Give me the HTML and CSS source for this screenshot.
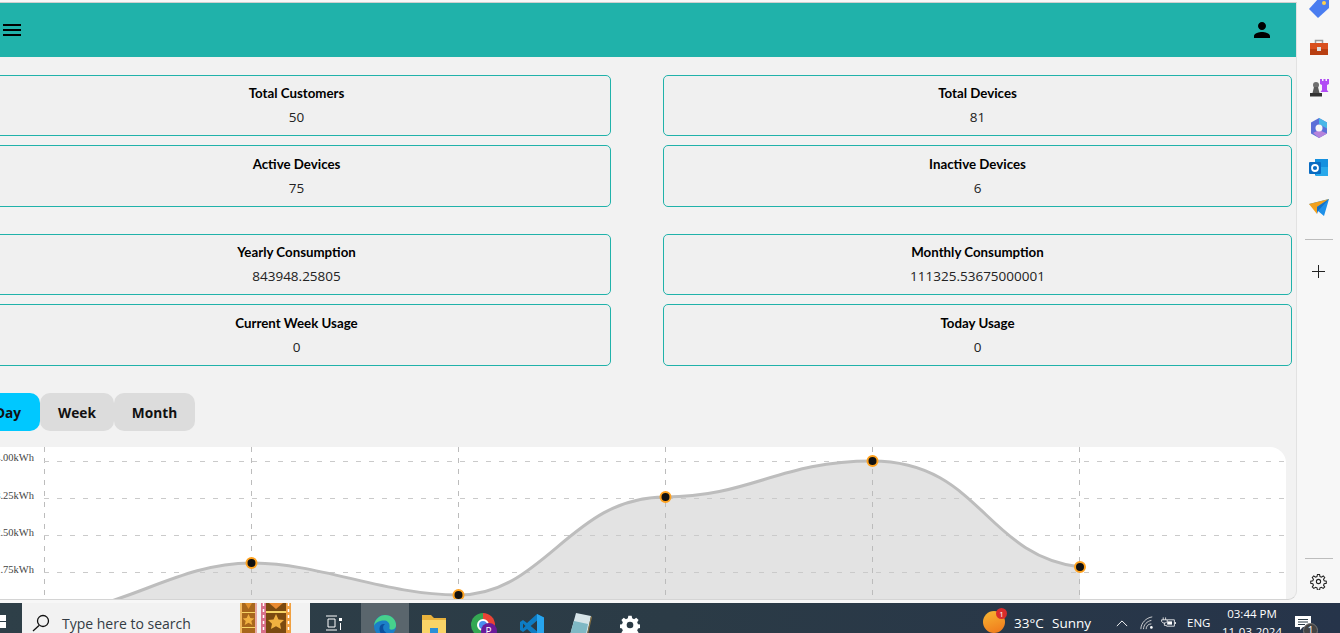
FILE: index.html
```html
<!DOCTYPE html>
<html lang="en">
<head>
<meta charset="utf-8">
<title>Dashboard</title>
<link rel="stylesheet" href="styles.css">
</head>
<body>
<div class="screen">
  <div class="window">
    <div class="page">
      <header class="appbar">
        <svg class="bar-icon" viewBox="0 0 24 24"><path d="M3 18h18v-2H3v2zm0-5h18v-2H3v2zm0-7v2h18V6H3z"/></svg>
        <svg class="bar-icon user" viewBox="0 0 24 24"><path d="M12 12c2.210 0 4-1.790 4-4s-1.790-4-4-4-4 1.790-4 4 1.790 4 4 4zm0 2c-2.670 0-8 1.340-8 4v2h16v-2c0-2.660-5.330-4-8-4z"/></svg>
      </header>
      <section class="stats">
        <div class="card"><b>Total Customers</b><span>50</span></div>
        <div class="card"><b>Total Devices</b><span>81</span></div>
        <div class="card"><b>Active Devices</b><span>75</span></div>
        <div class="card"><b>Inactive Devices</b><span>6</span></div>
      </section>
      <section class="stats second">
        <div class="card"><b>Yearly Consumption</b><span>843948.25805</span></div>
        <div class="card"><b>Monthly Consumption</b><span>111325.53675000001</span></div>
        <div class="card"><b>Current Week Usage</b><span>0</span></div>
        <div class="card"><b>Today Usage</b><span>0</span></div>
      </section>
      <nav class="tabs">
        <button class="tab active">Day</button>
        <button class="tab week">Week</button>
        <button class="tab month">Month</button>
      </nav>
      <section class="chart">
        <svg class="chart-svg" width="1286" height="153" viewBox="0 447 1286 153">
          <path class="area" d="M44 613C120 613 175 563 251 563C320 563 385 595 458 595C545 595 570 497 665 497C750 497 780 461 872 461C980 461 985 556 1080 567V600H44Z"/>
          <g class="grid">
            <path class="gv" d="M44.500 447V600M251.500 447V600M458.500 447V600M665.500 447V600M872.500 447V600M1079.500 447V600"/>
            <path class="gh" d="M44 461.500H1286M44 498.500H1286M44 535.500H1286M44 572.500H1286"/>
          </g>
          <path class="line" d="M44 613C120 613 175 563 251 563C320 563 385 595 458 595C545 595 570 497 665 497C750 497 780 461 872 461C980 461 985 556 1080 567"/>
          <g class="marks">
            <circle cx="251.500" cy="563" r="5"/><circle cx="458.500" cy="595" r="5"/><circle cx="665.500" cy="497" r="5"/><circle cx="872.500" cy="461" r="5"/><circle cx="1080" cy="567" r="5"/>
          </g>
          <g class="ylabels">
            <text x="34" y="461">4.00kWh</text><text x="34" y="499">3.25kWh</text><text x="34" y="536">2.50kWh</text><text x="34" y="573">1.75kWh</text>
          </g>
        </svg>
      </section>
    </div>
    <aside class="sidebar">
      <svg class="side-icon tag" viewBox="0 0 20 20"><path fill="#4a7df0" d="M10 0h8l2 2v8L9 20 0 11z"/><circle cx="15" cy="5" r="2" fill="#ffd34d"/></svg>
      <svg class="side-icon" viewBox="0 0 20 20"><path fill="none" stroke="#999" stroke-width="1.500" d="M6.500 5V2.500h7V5"/><path fill="#d9501e" d="M1 5h18v6H1z"/><path fill="#b83f12" d="M1 11h18v6H1z"/><rect x="8" y="9" width="4" height="4" fill="#ddd"/></svg>
      <svg class="side-icon" viewBox="0 0 20 20"><path fill="#b14cf5" d="M11 1h2v2h1.500V1h2v2H18V1h2v5l-2 1v5l1.500 2h-8l1.500-2V7l-2-1z"/><circle cx="7" cy="7" r="3" fill="#707070"/><path fill="#5a5a5a" d="M5 9h4l1.500 6h-7z"/><path fill="#333" d="M1 15h12v3.500H1z"/></svg>
      <svg class="side-icon" viewBox="0 0 20 20"><path fill="#5b6fd8" d="M10 0l8 4.500v11L10 20l-8-4.500v-11z"/><path fill="#48b8e8" d="M10 0l8 4.500v6L10 6z"/><path fill="#b583dc" d="M4 15l6-3 8 3.500L10 20z"/><circle cx="10" cy="10" r="3.500" fill="#f7f7f7"/></svg>
      <svg class="side-icon" viewBox="0 0 20 20"><path fill="#1490df" d="M6 1h13v16H6z"/><path fill="#28a8ea" d="M12 9h7v9h-13z"/><rect y="4" width="12" height="12" rx="1" fill="#0a6cc2"/><circle cx="6" cy="10" r="3" fill="none" stroke="#fff" stroke-width="1.800"/></svg>
      <svg class="side-icon" viewBox="0 0 20 20"><path fill="#1e90e8" d="M0 6L20 1 15 18 9 13z"/><path fill="#f2a11e" d="M0 6L20 1 8 9l0 7z"/><path fill="#1671c4" d="M8 9L20 1 9 13 8 16z"/></svg>
      <div class="side-rule upper"></div>
      <svg class="side-plus" viewBox="0 0 13 13"><path d="M6.500 0v13M0 6.500h13"/></svg>
      <div class="side-fill"></div>
      <div class="side-rule"></div>
      <svg class="side-gear" viewBox="0 0 24 24"><path d="M10.500 2h3l.6 3 2 .9 2.600-1.700 2.100 2.100-1.700 2.600.9 2 3 .6v3l-3 .6-.9 2 1.700 2.600-2.100 2.100-2.600-1.700-2 .9-.6 3h-3l-.6-3-2-.9-2.600 1.700-2.100-2.100 1.700-2.600-.9-2-3-.6v-3l3-.6.9-2-1.700-2.600 2.100-2.100 2.600 1.700 2-.9z"/><circle cx="12" cy="12" r="3"/></svg>
    </aside>
  </div>
  <footer class="taskbar">
    <div class="start">
      <svg class="winlogo" viewBox="0 0 13 13"><path fill="#fff" d="M0 0h6v6H0zM0 7h6v6H0z"/></svg>
    </div>
    <div class="search">
      <svg class="glass" viewBox="0 0 18 18"><circle cx="11" cy="7" r="5.500"/><path d="M7 11.500L1 17"/></svg>
      <span>Type here to search</span>
      <svg class="film" viewBox="0 0 51 30">
        <rect width="17" height="30" fill="#a8671c"/><rect x="21" width="30" height="30" fill="#7b4a10"/>
        <rect x="21" width="5" height="30" fill="#d8708a"/><rect x="46" width="5" height="30" fill="#f0a040"/>
        <rect width="2" height="30" fill="#f0b860"/><rect x="15" width="2" height="30" fill="#e9a9a0"/>
        <rect x="2" y="9" width="13" height="1" fill="#f6d465"/><rect x="2" y="24" width="13" height="1" fill="#f6d465"/><rect x="26" y="8" width="20" height="2" fill="#f6d465"/>
        <path class="perf" d="M23.500 0v30M48.500 0v30"/>
        <path fill="#f0b040" d="M8.500 11l1.800 4 4 .4-3 2.600 1 4-3.800-2.200-3.800 2.200 1-4-3-2.600 4-.4zM36 11l2.500 5.400 5.500.6-4 3.700 1.100 5.300-5.100-2.800-5.100 2.800 1.100-5.300-4-3.700 5.500-.6z"/>
        <path fill="#e98a30" d="M29 0h14l-7 6z"/><path fill="#e0902c" d="M5 0h7L8.500 6z"/>
      </svg>
    </div>
    <div class="slot taskview">
      <svg viewBox="0 0 17 16" class="tv"><path d="M1 1h11M1 15h11M3 4h7v8H3z"/><rect x="14" y="3" width="3" height="3" fill="#fff" stroke="none"/><rect x="15" y="8" width="1" height="7" fill="#fff" stroke="none"/></svg>
    </div>
    <div class="slot current">
      <svg viewBox="0 0 26 26" class="app"><circle cx="13" cy="13" r="12" fill="#1b7fc8"/><path fill="#47d18c" d="M1 13C2 4 9 1 13 1c7 0 12 5 12 11 0 4-3 5-5 5-3 0-2-2-2-4 0-4-3-6-6-6-6 0-10 3-11 6z"/><path fill="#0c4f9e" d="M7 16c0-4 3-6 6-5-2 1-2 3-2 4 0 4 5 8 10 6-3 3-7 4-9 3-3-1-5-4-5-8z"/></svg>
    </div>
    <div class="slot">
      <svg viewBox="0 0 24 24" class="app"><path fill="#e8b23c" d="M0 1h9l3 3h12v4H0z"/><path fill="#f9d467" d="M0 6h24v18H0z"/><path fill="#2a8fd8" d="M8 14h8v10h-3v-5h-2v5H8z"/></svg>
    </div>
    <div class="slot">
      <span class="chrome"><span class="chrome-dot"></span><span class="chrome-p">P</span></span>
    </div>
    <div class="slot">
      <svg viewBox="0 0 24 24" class="app"><path fill="#0d7cc4" d="M17 0l7 3.500v17L17 24 7 15 3 18l-3-2v-8l3-2 4 3z"/><path fill="#27a4ee" d="M17 0l7 3.500v17L17 24zM17 6.500L10.500 12l6.500 5.500z"/><path fill="#2b3a44" d="M17 6.500L10.500 12l6.500 5.500z"/><path fill="#2b3a44" d="M3 9.500L5.500 12 3 14.500z"/></svg>
    </div>
    <div class="slot">
      <svg viewBox="0 0 24 26" class="app"><path fill="#d7e4e8" d="M7 0l15 3-5 23L1 22z"/><path fill="#7fb8c4" d="M5 8l14 3-3 15L1 22z"/><path fill="#8a7344" d="M22 3l1 1-5 22h-1z"/></svg>
    </div>
    <div class="slot">
      <svg viewBox="0 0 24 24" class="appgear"><path d="M10 1h4l.6 3 2.300 1 2.600-1.700 2.800 2.800-1.700 2.600 1 2.300 3 .6v4l-3 .6-1 2.300 1.700 2.600-2.800 2.800-2.600-1.700-2.300 1-.6 3h-4l-.6-3-2.300-1-2.600 1.700-2.800-2.800 1.700-2.600-1-2.300-3-.6v-4l3-.6 1-2.300-1.700-2.600 2.800-2.800 2.600 1.700 2.300-1z" fill="#fff"/><circle cx="12" cy="12" r="4" fill="#2b3a44"/></svg>
    </div>
    <div class="tray-gap"></div>
    <div class="tray">
      <span class="sun"><span class="sun-badge">1</span></span>
      <span class="temp">33°C</span>
      <span class="sky">Sunny</span>
      <svg class="chev" viewBox="0 0 14 8"><path d="M1 7l6-6 6 6"/></svg>
      <svg class="wifi" viewBox="0 0 16 16"><path d="M1 15C1 8 7 2 14 1M4 15c0-5 4-9 9-10M7 15c0-3 2-6 6-6"/><circle cx="13" cy="13" r="1.500" fill="#fff" stroke="none"/></svg>
      <svg class="batt" viewBox="0 0 20 14"><path d="M4 0v3M7 0v3M2 3h7v2l-2 2H4L2 5zM5.500 7v3h3"/><path d="M9 3h9v8H8"/><rect x="9" y="5" width="6" height="4" fill="#fff" stroke="none"/><rect x="18.500" y="6" width="1.500" height="2" fill="#fff" stroke="none"/></svg>
      <span class="lang">ENG</span>
      <span class="clock"><span>03:44 PM</span><span>11-03-2024</span></span>
      <span class="notif">
        <svg viewBox="0 0 16 15"><path fill="#fff" d="M0 0h16v11H8l-3 3v-3H0z"/><path stroke="#2b3a44" d="M3 3.500h10M3 6h10M3 8.500h7"/></svg>
        <span class="notif-count">1</span>
      </span>
    </div>
  </footer>
</div>
</body>
</html>
```

FILE: styles.css
```css
* { box-sizing: border-box; }
html, body { margin: 0; height: 100%; overflow: hidden; }
body { font-family: "Open Sans", "Noto Sans", sans-serif; color: #111; }
.screen { width: 1340px; height: 633px; display: flex; flex-direction: column; overflow: hidden; background: #f7f7f7; }
.window { height: 603px; display: flex; flex: none; background: #f7f7f7; border-top: 2px solid #f7f7f7; }
.page {
  width: 1297px; height: 598px; flex: none; overflow: hidden;
  background: #f2f2f2; border-right: 1px solid #e2e2e2; border-bottom: 1px solid #d4d4d4;
  border-top: 1px solid #cfcfcf; border-bottom-right-radius: 9px;
}
.appbar { height: 54px; background: #20b2aa; display: flex; align-items: center; justify-content: space-between; }
.bar-icon { width: 24px; height: 24px; display: block; fill: #000; }
.user { margin-right: 22px; }
.stats {
  display: grid; grid-template-columns: 629px 629px; column-gap: 52px; row-gap: 9px;
  grid-template-rows: 61px 62px; margin: 18px 0 0 -18px;
}
.second { margin-top: 27px; }
.card {
  display: flex; flex-direction: column; align-items: center; justify-content: center; gap: 5px;
  background: #f0f0f0; border: 1px solid #20b2aa; border-radius: 5px; font-size: 13.500px; line-height: 19px;
}
.card b { font-family: "Lato", "Open Sans", sans-serif; font-weight: 700; font-size: 13.300px; color: #000; }
.card span { color: #222; }
.tabs { display: flex; margin: 27px 0 0 -24px; height: 38px; }
.tab {
  height: 38px; border: 0; border-radius: 10px; background: #dcdcdc; color: #111;
  font: 700 13.700px "Open Sans", "Noto Sans", sans-serif; padding: 0;
}
.tab.active { width: 64px; background: #00c8ff; }
.week { width: 74px; }
.month { width: 81px; }
.chart { width: 1286px; height: 154px; margin-top: 16px; background: #fff; border-radius: 0 16px 0 0; overflow: hidden; }
.chart-svg { display: block; }
.area { fill: #e3e3e3; }
.line { fill: none; stroke: #bdbdbd; stroke-width: 3; }
.grid path { fill: none; stroke-width: 1; }
.gv { stroke: #bcbcbc; stroke-dasharray: 5 6; }
.gh { stroke: #cacaca; stroke-dasharray: 5 8; }
.marks circle { fill: #111; stroke: #ffa21f; stroke-width: 2; }
.ylabels text { font: 10.500px "Liberation Serif", serif; fill: #444; text-anchor: end; }
.sidebar { width: 43px; flex: none; display: flex; flex-direction: column; align-items: center; height: 601px; margin-top: -2px; }
.side-icon { width: 20px; height: 20px; flex: none; margin-bottom: 20px; display: block; }
.tag { margin-top: -2px; }
.side-rule { width: 28px; height: 1px; background: #bdbdbd; flex: none; }
.upper { margin-top: 1px; }
.side-plus { width: 13px; height: 13px; flex: none; margin: 25px 0; fill: none; stroke: #222; }
.side-fill { flex: 1; }
.side-gear { width: 17px; height: 17px; flex: none; margin: 14px 0 11px; fill: none; stroke: #222; stroke-width: 1.500; }
.taskbar { height: 30px; flex: none; display: flex; background: linear-gradient(90deg, #2e3f48, #2b3b46 50%, #26344a); overflow: hidden; color: #fff; }
.start { width: 22px; flex: none; padding-top: 12px; }
.winlogo { width: 13px; height: 13px; display: block; }
.search { width: 288px; flex: none; background: #f2f2f2; display: flex; align-items: flex-start; color: #333c44; font-size: 14px; line-height: 20px; }
.glass { width: 18px; height: 18px; margin: 11px 12px 0 10px; flex: none; fill: none; stroke: #111; stroke-width: 1.300; }
.search span { padding-top: 11px; width: 178px; flex: none; white-space: nowrap; }
.film { width: 51px; height: 30px; flex: none; }
.perf { stroke: #fff; stroke-width: 1.500; stroke-dasharray: 3 3; fill: none; }
.slot { width: 49px; height: 30px; flex: none; display: flex; justify-content: center; padding-top: 10px; }
.taskview { width: 51px; padding: 12px 4px 0 0; }
.tv { width: 17px; height: 16px; fill: none; stroke: #fff; stroke-width: 1; }
.current { width: 48px; background: #5a666d; }
.app { width: 24px; height: 26px; flex: none; }
.appgear { width: 20px; height: 20px; flex: none; margin-top: 2px; }
.chrome { width: 24px; height: 24px; border-radius: 50%; display: block; position: relative; background: conic-gradient(#ea4335 0 33%, #fbbc04 33% 50%, #34a853 50% 100%); }
.chrome-dot { position: absolute; left: 6px; top: 6px; width: 12px; height: 12px; border-radius: 50%; background: #4b8df0; border: 2px solid #fff; }
.chrome-p { position: absolute; left: 10px; top: 10px; width: 16px; height: 16px; border-radius: 50%; background: #6a1b9a; color: #fff; font-size: 10px; line-height: 16px; text-align: center; }
.tray-gap { flex: 1; }
.tray { display: flex; align-items: flex-start; flex: none; height: 30px; width: 357px; font-size: 13.500px; line-height: 18px; }
.sun { width: 22px; height: 22px; border-radius: 50%; margin: 8px 9px 0 0; position: relative; flex: none; background: linear-gradient(160deg, #f7b733, #f0761a); }
.sun-badge { position: absolute; right: -2px; top: -3px; width: 11px; height: 11px; border-radius: 50%; background: #d92c2c; font-size: 8px; line-height: 11px; text-align: center; }
.temp { padding-top: 11px; width: 38px; flex: none; }
.sky { padding-top: 11px; width: 64px; flex: none; }
.chev { width: 12px; height: 7px; margin: 17px 0 0 0; flex: none; fill: none; stroke: #fff; stroke-width: 1.100; }
.wifi { width: 14px; height: 14px; margin: 13px 0 0 12px; flex: none; fill: none; stroke: #ddd; stroke-width: 1; }
.batt { width: 16px; height: 12px; margin: 14px 0 0 6px; flex: none; fill: none; stroke: #fff; stroke-width: 1; }
.lang { font-size: 11.500px; margin: 11px 0 0 11px; width: 26px; flex: none; }
.clock { display: flex; flex-direction: column; align-items: center; width: 66px; margin: 2px 0 0 6px; flex: none; font-size: 11.500px; line-height: 18px; }
.notif { position: relative; width: 16px; height: 15px; margin: 13px 0 0 10px; flex: none; }
.notif svg { display: block; width: 16px; height: 15px; }
.notif-count { position: absolute; left: 8px; top: 7px; width: 15px; height: 15px; border-radius: 50%; background: #444; border: 1px solid #777; font-size: 10px; line-height: 13px; text-align: center; }
```
